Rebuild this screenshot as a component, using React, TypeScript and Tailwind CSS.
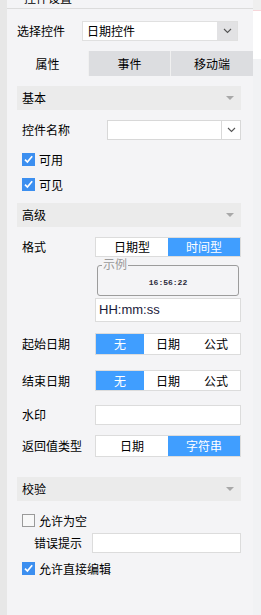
import React from "react";

const font = { fontFamily: '"Microsoft YaHei", "Noto Sans CJK SC", "Liberation Sans", sans-serif' };

function Chevron({ className = "" }: { className?: string }) {
  return (
    <svg width="9" height="6" viewBox="0 0 9 6" className={className}>
      <path d="M1 1 L4.5 4.5 L8 1" fill="none" stroke="#555" strokeWidth="1.1" />
    </svg>
  );
}

function Tri() {
  return (
    <svg width="10" height="6" viewBox="0 0 10 6">
      <path d="M1 1 L9 1 L5 5 Z" fill="#a8a8a8" />
    </svg>
  );
}

function SectionHeader({ title }: { title: string }) {
  return (
    <div className="flex h-[24px] items-center justify-between bg-[#ebebeb] pl-[5px] pr-[6px] text-[12px] text-black">
      <span>{title}</span>
      <Tri />
    </div>
  );
}

function Check({ checked }: { checked: boolean }) {
  if (checked)
    return (
      <div className="flex h-[13px] w-[13px] items-center justify-center bg-[#3c8ff0]">
        <svg width="11" height="11" viewBox="0 0 11 11">
          <path d="M2 5.6 L4.4 8 L9.2 2.2" fill="none" stroke="#fff" strokeWidth="1.7" />
        </svg>
      </div>
    );
  return <div className="h-[13px] w-[13px] border border-[#9a9a9a] bg-[#f8f8f8]" />;
}

function Seg({ items, active, h = "h-[22px]" }: { items: string[]; active: number; h?: string }) {
  return (
    <div className={`flex ${h} flex-1 border border-[#dcdcdc] bg-white text-[12px]`}>
      {items.map((it, i) => (
        <div
          key={it}
          className={`flex flex-1 items-center justify-center ${i === active ? "bg-[#409eff] text-white" : "text-black"}`}
        >
          {it}
        </div>
      ))}
    </div>
  );
}

function Label({ text }: { text: string }) {
  return <div className="w-[78px] shrink-0 pl-[5px] text-[12px] text-black">{text}</div>;
}

export default function App() {
  return (
    <div className="flex h-[615px] w-[261px] overflow-hidden bg-[#f4f4f6]" style={font}>
      <div className="w-[7px] shrink-0 bg-[#e7e7e7]" />
      <div className="flex w-[246px] shrink-0 flex-col bg-[#f4f4f6]">
        <div className="h-[9px] overflow-hidden border-b border-[#dcdcdc]">
          <div className="-mt-[10px] pl-[17px] text-[12px] leading-[16px] text-black">控件设置</div>
        </div>
        <div className="flex items-center pl-[10px] pt-[12px] pb-[10px] text-[12px]">
          <div className="w-[65px]">选择控件</div>
          <div className="flex h-[20px] w-[156px] items-center border border-[#e0e0e0] bg-white">
            <span className="flex-1 pl-[4px] text-[12px]">日期控件</span>
            <div className="flex h-full w-[20px] items-center justify-center bg-[#e2e2e4]">
              <Chevron />
            </div>
          </div>
        </div>
        <div className="flex h-[25px] text-[12px]">
          <div className="flex w-[81px] items-center justify-center bg-[#f4f4f6]">属性</div>
          <div className="flex w-[82px] items-center justify-center border-l border-[#f0f0f0] bg-[#dcdde0]">事件</div>
          <div className="flex w-[83px] items-center justify-center border-l border-[#f0f0f0] bg-[#dcdde0]">移动端</div>
        </div>
        <div className="flex flex-col pl-[10px] pr-[12px] pt-[10px]">
          <SectionHeader title="基本" />
          <div className="mt-[10px] flex items-center">
            <div className="w-[90px] shrink-0 pl-[5px] text-[12px]">控件名称</div>
            <div className="flex h-[20px] flex-1 border border-[#d8d8d8] bg-white">
              <div className="flex-1" />
              <div className="flex w-[19px] items-center justify-center border-l border-[#d8d8d8]">
                <Chevron />
              </div>
            </div>
          </div>
          <div className="mt-[13px] flex items-center gap-[4px] pl-[5px] text-[12px] leading-[13px]">
            <Check checked />
            <span>可用</span>
          </div>
          <div className="mt-[12px] flex items-center gap-[4px] pl-[5px] text-[12px] leading-[13px]">
            <Check checked />
            <span>可见</span>
          </div>
          <div className="mt-[12px]">
            <SectionHeader title="高级" />
          </div>
          <div className="mt-[10px] flex">
            <div className="w-[78px] shrink-0 pl-[5px] pt-[1px] text-[12px]">格式</div>
            <div className="flex flex-1 flex-col">
              <Seg items={["日期型", "时间型"]} active={1} />
              <div className="relative mx-[2px] mt-[8px] h-[31px] rounded-[3px] border border-[#9c9c9c]">
                <span className="absolute -top-[9px] left-[4px] bg-[#f4f4f6] px-[1px] text-[12px] leading-[14px] text-[#9a9a9a]">示例</span>
                <div
                  className="flex h-full items-center justify-center pt-[5px] text-[8px] font-bold text-[#2a2a3a]"
                  style={{ fontFamily: '"Liberation Mono", monospace' }}
                >
                  16:56:22
                </div>
              </div>
              <div
                className="mt-[2px] flex h-[24px] items-center border border-[#dcdcdc] bg-white pl-[3px] text-[13px] text-[#1a1a3a]"
                style={{ fontFamily: '"Liberation Sans", Arial, sans-serif' }}
              >
                HH:mm:ss
              </div>
            </div>
          </div>
          <div className="mt-[11px] flex items-center">
            <Label text="起始日期" />
            <Seg items={["无", "日期", "公式"]} active={0} />
          </div>
          <div className="mt-[15px] flex items-center">
            <Label text="结束日期" />
            <Seg items={["无", "日期", "公式"]} active={0} h="h-[21px]" />
          </div>
          <div className="mt-[14px] flex items-center">
            <Label text="水印" />
            <div className="h-[20px] flex-1 border border-[#dcdcdc] bg-white" />
          </div>
          <div className="mt-[10px] flex items-center">
            <Label text="返回值类型" />
            <Seg items={["日期", "字符串"]} active={1} />
          </div>
          <div className="mt-[20px]">
            <SectionHeader title="校验" />
          </div>
          <div className="mt-[13px] flex items-center gap-[4px] pl-[5px] text-[12px] leading-[13px]">
            <Check checked={false} />
            <span>允许为空</span>
          </div>
          <div className="mt-[6px] flex items-center">
            <div className="w-[75px] shrink-0 pl-[17px] text-[12px]">错误提示</div>
            <div className="h-[20px] flex-1 border border-[#dcdcdc] bg-white" />
          </div>
          <div className="mt-[9px] flex items-center gap-[4px] pl-[5px] text-[12px] leading-[13px]">
            <Check checked />
            <span>允许直接编辑</span>
          </div>
        </div>
      </div>
      <div className="flex w-[8px] shrink-0 flex-col">
        <div className="h-[10px] bg-[#efefef]" />
        <div className="h-[49px] border-t border-[#f6d6da] bg-white" />
        <div className="flex-1 bg-[#f1f2f4]" />
      </div>
    </div>
  );
}
